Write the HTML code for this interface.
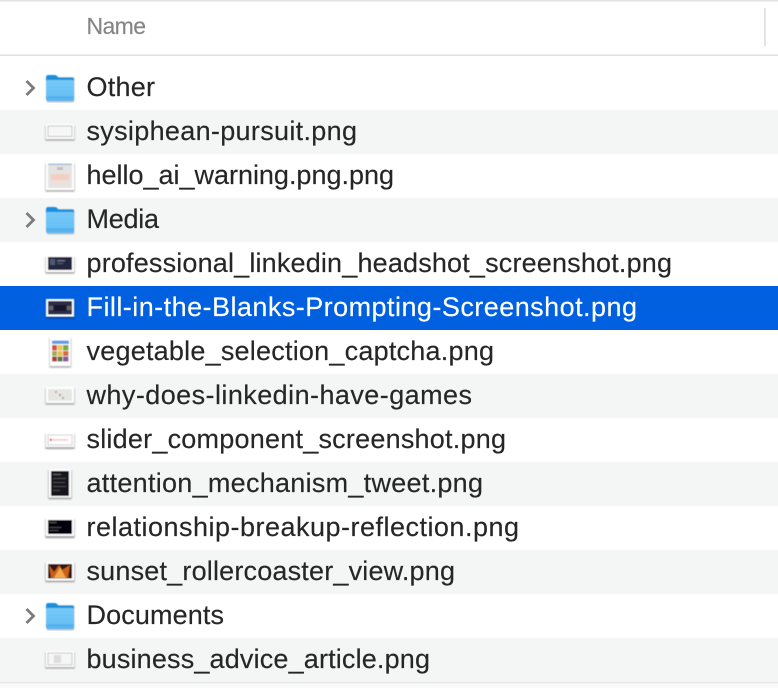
<!DOCTYPE html>
<html><head><meta charset="utf-8"><style>
html,body{margin:0;padding:0;background:#fff}
svg{display:block}
text{font-family:"Liberation Sans",sans-serif;font-size:27px;fill:#262626;stroke:#262626;stroke-width:.15px}
</style></head><body>
<svg width="778" height="688" viewBox="0 0 778 688" xmlns="http://www.w3.org/2000/svg">
<defs>
<linearGradient id="fb" x1="0" y1="0" x2="0" y2="1"><stop offset="0" stop-color="#76c9f8"/><stop offset="1" stop-color="#62bdf4"/></linearGradient>
<filter id="b" x="-20%" y="-20%" width="140%" height="140%"><feGaussianBlur stdDeviation="0.45"/></filter>
<filter id="s" x="-20%" y="-30%" width="140%" height="170%"><feGaussianBlur stdDeviation="0.9"/></filter>
<g id="folder" filter="url(#b)">
<rect x="46.500" y="11" width="28" height="25.500" rx="2" fill="#9aa6ae" opacity=".6"/>
<path d="M46 11.500Q46 9 48.500 9H54.500Q56.500 9 57.500 10.500L58.500 11.500H72Q74 11.500 74 13.500V20H46Z" fill="#1a8edc"/>
<path d="M46 15.500Q46 14 48 14H72Q74 14 74 15.500V32.500Q74 35 71.500 35H48.500Q46 35 46 32.500Z" fill="url(#fb)"/>
<rect x="46" y="30.500" width="28" height="1.200" fill="#4aa9ea"/>
<path d="M46 31.700H74V33Q74 35 71.500 35H48.500Q46 35 46 33Z" fill="#58b4f0"/>
</g>
<path id="chev" d="M26.500 15L33.500 22L26.500 29" fill="none" stroke="#7c7c7c" stroke-width="2.800"/>
</defs>

<rect width="778" height="688" fill="#fff"/>
<rect width="778" height="1.500" fill="#e2e2e2"/>
<rect y="54.500" width="778" height="1.500" fill="#e0e0e0"/>
<rect x="764" y="8" width="1.800" height="38" fill="#e2e2e2"/>
<text x="86.500" y="34" textLength="59.500" lengthAdjust="spacing" style="font-size:23px;fill:#858585;stroke:#858585">Name</text>

<rect y="110" width="778" height="44" fill="#f4f5f5"/>
<rect y="198" width="778" height="44" fill="#f4f5f5"/>
<rect y="286" width="778" height="44" fill="#0060e0"/>
<rect y="374" width="778" height="44" fill="#f4f5f5"/>
<rect y="462" width="778" height="44" fill="#f4f5f5"/>
<rect y="550" width="778" height="44" fill="#f4f5f5"/>
<rect y="638" width="778" height="44" fill="#f4f5f5"/>
<rect y="682" width="778" height="6" fill="#fafafa"/>
<rect y="682" width="778" height="1.500" fill="#e9e9e9"/>

<g transform="translate(0,66)"><use href="#chev"/><use href="#folder"/></g>
<g transform="translate(0,198)"><use href="#chev"/><use href="#folder"/></g>
<g transform="translate(0,594)"><use href="#chev"/><use href="#folder"/></g>

<!-- sysiphean -->
<g filter="url(#b)">
<rect x="45.500" y="126" width="29" height="14.500" fill="#777" opacity=".7" filter="url(#s)"/>
<rect x="46" y="124" width="28" height="15" fill="#fff"/>
<rect x="48" y="126" width="24" height="10.500" fill="#f6f6f6" stroke="#c4c4c4" stroke-width="1"/>
</g>

<!-- hello -->
<g filter="url(#b)">
<rect x="45.500" y="163.500" width="29" height="28" fill="#777" opacity=".7" filter="url(#s)"/>
<rect x="46" y="162" width="28" height="28" fill="#fff"/>
<rect x="48" y="164" width="24" height="24" fill="#e4e4e2"/>
<rect x="48" y="163.500" width="24" height="1.500" fill="#a9bcdc"/>
<rect x="51" y="174" width="18" height="6" fill="#f3cfc2"/>
<rect x="51" y="180" width="18" height="4" fill="#f1e0d8"/>
<rect x="57" y="167" width="6" height="3" fill="#c0c0c0"/>
</g>

<!-- professional -->
<g filter="url(#b)">
<rect x="45.500" y="257" width="29" height="16.500" fill="#666" opacity=".7" filter="url(#s)"/>
<rect x="46" y="255" width="28" height="17" fill="#fff"/>
<rect x="48" y="257" width="24" height="13" fill="#22283f"/>
<rect x="50" y="259" width="5" height="6" fill="#505a70"/>
<rect x="57" y="260" width="8" height="1.500" fill="#6a7080"/>
<rect x="57" y="263" width="6" height="1" fill="#555c70"/>
</g>

<!-- Fill -->
<g filter="url(#b)">
<rect x="46" y="300" width="28.500" height="18.500" fill="#00327f" opacity=".7" filter="url(#s)"/>
<rect x="46" y="299" width="28" height="17.500" fill="#fff"/>
<rect x="48" y="301" width="24" height="13.500" fill="#2a2d4a"/>
<rect x="54" y="305" width="12" height="6" fill="#17182a"/>
<rect x="49" y="306" width="4" height="4" fill="#6a6560"/>
<rect x="67" y="306" width="4" height="4" fill="#6a6560"/>
</g>

<!-- vegetable -->
<g filter="url(#b)">
<rect x="49.500" y="338" width="21.500" height="29.500" fill="#777" opacity=".7" filter="url(#s)"/>
<rect x="50" y="337" width="20.500" height="29" fill="#fff"/>
<rect x="52" y="340.500" width="17" height="3.500" fill="#5d9ee8"/>
<rect x="52" y="345" width="5" height="5.500" fill="#d8503a"/>
<rect x="57.500" y="345" width="5" height="5.500" fill="#e8c84a"/>
<rect x="63" y="345" width="5.500" height="5.500" fill="#7aa83f"/>
<rect x="52" y="351" width="5" height="5" fill="#9cb04a"/>
<rect x="57.500" y="351" width="5" height="5" fill="#e8c04a"/>
<rect x="63" y="351" width="5.500" height="5" fill="#d86a3a"/>
<rect x="52" y="356.500" width="5" height="5" fill="#b03a3a"/>
<rect x="57.500" y="356.500" width="5" height="5" fill="#5a7a3a"/>
<rect x="63" y="356.500" width="5.500" height="5" fill="#8a5a9a"/>
</g>

<!-- why -->
<g filter="url(#b)">
<rect x="45.500" y="388.500" width="29" height="16" fill="#777" opacity=".7" filter="url(#s)"/>
<rect x="46" y="387" width="28" height="16" fill="#fff"/>
<rect x="48" y="389" width="24" height="12" fill="#e6e6e3"/>
<rect x="55" y="391" width="2" height="2" fill="#c89aa8"/>
<rect x="59" y="394" width="2" height="2" fill="#a0a0a8"/>
<rect x="62" y="397" width="2" height="2" fill="#a8a8b0"/>
</g>

<!-- slider -->
<g filter="url(#b)">
<rect x="45.500" y="434" width="29" height="15" fill="#777" opacity=".7" filter="url(#s)"/>
<rect x="46" y="433" width="28" height="14" fill="#fff"/>
<rect x="48" y="435" width="24" height="10" fill="#fdfdfd" stroke="#cfcfcf" stroke-width=".9"/>
<rect x="50" y="439.400" width="18" height="1" fill="#eeb0b0"/>
<rect x="49.800" y="438.800" width="1.800" height="2" fill="#dd4444"/>
</g>

<!-- attention -->
<g filter="url(#b)">
<rect x="48.500" y="470" width="23" height="29" fill="#666" opacity=".7" filter="url(#s)"/>
<rect x="49" y="469" width="22" height="28.500" fill="#fff"/>
<rect x="51" y="471" width="18" height="25" fill="#15181a"/>
<rect x="53" y="474" width="8" height="1" fill="#666"/>
<rect x="53" y="478" width="13" height="1" fill="#4a4a4a"/>
<rect x="53" y="482" width="12" height="1" fill="#4a4a4a"/>
<rect x="53" y="486" width="13" height="1" fill="#4a4a4a"/>
<rect x="53" y="490" width="7" height="1" fill="#4a4a4a"/>
</g>

<!-- relationship -->
<g filter="url(#b)">
<rect x="45.500" y="519" width="29" height="19" fill="#666" opacity=".7" filter="url(#s)"/>
<rect x="46" y="518" width="28" height="18" fill="#fff"/>
<rect x="48" y="520" width="24" height="14" fill="#05060a"/>
<rect x="49.500" y="522" width="7" height="1" fill="#555"/>
<rect x="49.500" y="527" width="12" height="1" fill="#444"/>
<rect x="49.500" y="530" width="9" height="1" fill="#444"/>
</g>

<!-- sunset -->
<g filter="url(#b)">
<rect x="45.500" y="563" width="29" height="19" fill="#666" opacity=".7" filter="url(#s)"/>
<rect x="46" y="562" width="28" height="18.500" fill="#fff"/>
<rect x="48" y="564" width="24" height="14.500" fill="#33190f"/>
<path d="M49 565L54 572L59 565L62 570L70 565L68 578H51Z" fill="#c8601a"/>
<path d="M54 578L60 567L66 578Z" fill="#f5a84a"/>
</g>

<!-- business -->
<g filter="url(#b)">
<rect x="45.500" y="652" width="29" height="16.500" fill="#777" opacity=".7" filter="url(#s)"/>
<rect x="46" y="651" width="28" height="16" fill="#fff"/>
<rect x="48" y="653" width="24" height="12" fill="#f6f6f6" stroke="#c4c4c4" stroke-width=".9"/>
<rect x="54" y="655" width="7" height="8" fill="#dcdcdc"/>
</g>

<text x="86.500" y="96" textLength="68.500" lengthAdjust="spacing">Other</text>
<text x="86.500" y="140" textLength="270.500" lengthAdjust="spacing">sysiphean-pursuit.png</text>
<text x="86.500" y="184" textLength="307.500" lengthAdjust="spacing">hello_ai_warning.png.png</text>
<text x="86.500" y="228" textLength="72.500" lengthAdjust="spacing">Media</text>
<text x="86.500" y="272" textLength="585.500" lengthAdjust="spacing">professional_linkedin_headshot_screenshot.png</text>
<text x="86.500" y="316" textLength="550.500" lengthAdjust="spacing" style="fill:#fff;stroke:#fff">Fill-in-the-Blanks-Prompting-Screenshot.png</text>
<text x="86.500" y="360" textLength="407.500" lengthAdjust="spacing">vegetable_selection_captcha.png</text>
<text x="86.500" y="404" textLength="385.500" lengthAdjust="spacing">why-does-linkedin-have-games</text>
<text x="86.500" y="448" textLength="419.500" lengthAdjust="spacing">slider_component_screenshot.png</text>
<text x="86.500" y="492" textLength="396.500" lengthAdjust="spacing">attention_mechanism_tweet.png</text>
<text x="86.500" y="536" textLength="432.500" lengthAdjust="spacing">relationship-breakup-reflection.png</text>
<text x="86.500" y="580" textLength="368.500" lengthAdjust="spacing">sunset_rollercoaster_view.png</text>
<text x="86.500" y="624" textLength="137.500" lengthAdjust="spacing">Documents</text>
<text x="86.500" y="668" textLength="343.500" lengthAdjust="spacing">business_advice_article.png</text>
</svg>
</body></html>
